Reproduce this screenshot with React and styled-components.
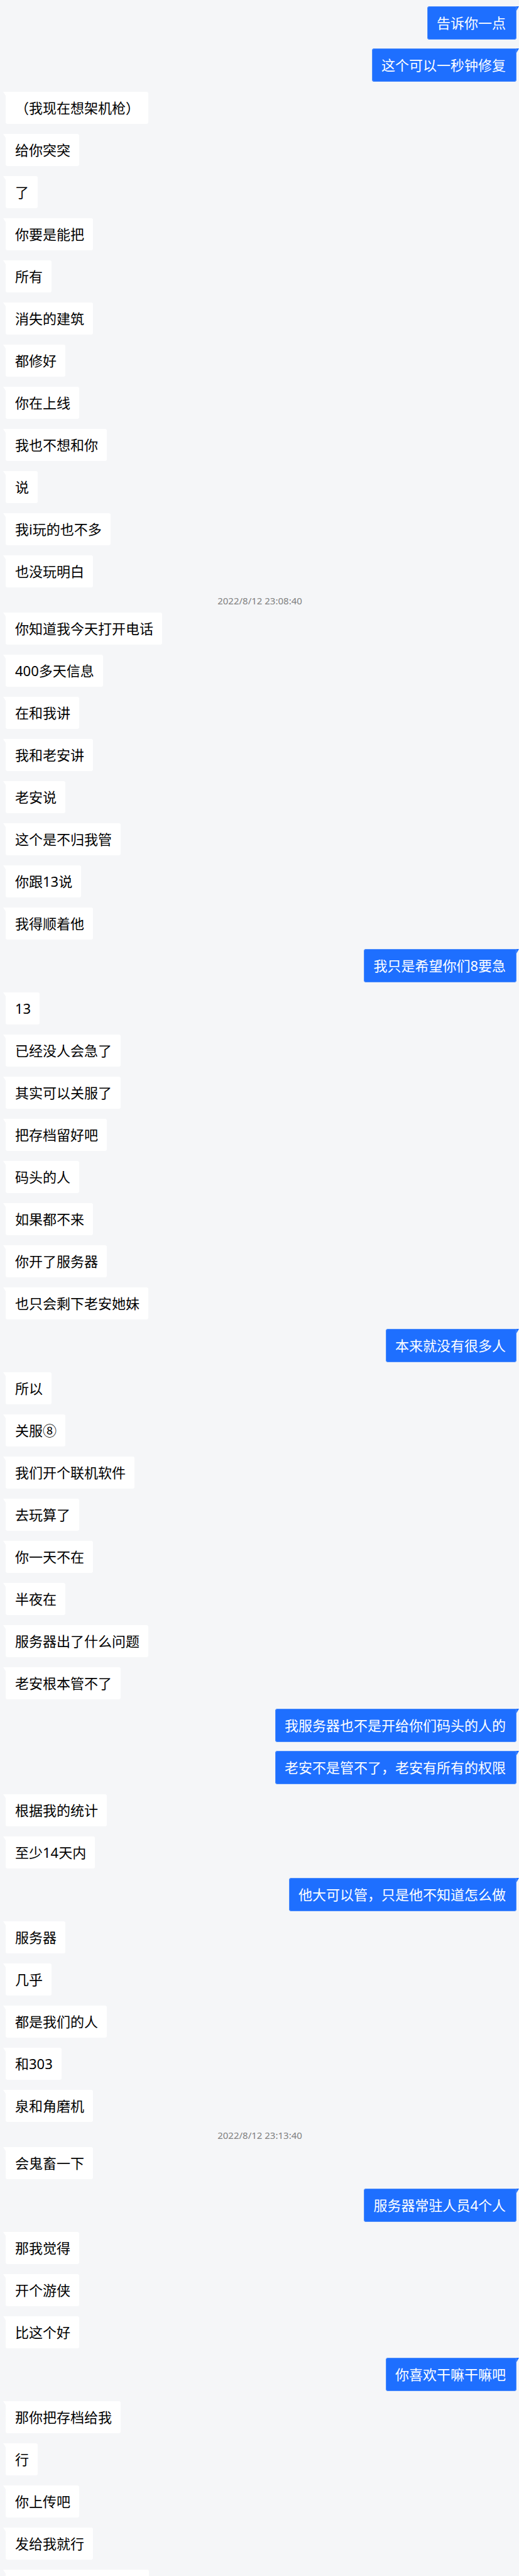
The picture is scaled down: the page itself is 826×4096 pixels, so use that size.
import React from "react";
import styled, { createGlobalStyle, css } from "styled-components";

const GlobalStyle = createGlobalStyle`
  * { box-sizing: border-box; }
  html, body { margin: 0; background: #f5f6f8; }
`;

const Page = styled.main`
  min-height: 100vh;
  padding: 10px 4px 0 5px;
  background: #f5f6f8;
  overflow: hidden;
  font-family: "Noto Sans", "Noto Sans CJK SC", sans-serif;
`;

const Thread = styled.ol`
  display: flex;
  flex-direction: column;
  margin: 0;
  padding: 0;
  list-style: none;
`;

const Row = styled.li`
  display: flex;
  padding-left: 4px;
  margin-top: 16px;
  justify-content: ${(p) => (p.$mine ? "flex-end" : "flex-start")};

  ${(p) => p.$turn && p.$mine && css`margin-top: 15px;`}
  ${(p) => !p.$turn && p.$mine && css`margin-top: 14px;`}
  &:first-child { margin-top: 0; }
`;

const Bubble = styled.p`
  position: relative;
  margin: 0;
  font-size: 22px;
  line-height: 31px;
  white-space: nowrap;
  padding: 10px 14px 10px 15px;
  color: #000;
  background: #fff;
  border-radius: 0 3px 3px 3px;

  &::before {
    content: "";
    position: absolute;
    top: 0;
    left: -4px;
    width: 4px;
    height: 6px;
    background: #fff;
    clip-path: polygon(0 0, 100% 0, 100% 100%);
  }

  ${(p) => p.$mine && css`
    padding: 11px 17px 11px 15px;
    color: #fff;
    background: #1e6fff;
    border-radius: 4px 0 4px 4px;
    box-shadow: inset 0 0 0 1px #4f8efc;

    &::before {
      left: auto;
      right: -4px;
      height: 7px;
      background: #1e6fff;
      clip-path: polygon(0 0, 100% 0, 0 100%);
    }
  `}
`;

const CutBubble = styled(Bubble)`
  width: 228px;
  height: 10px;
  padding: 0;
  border-radius: 0 3px 0 0;
`;

const StampRow = styled.li`
  display: flex;
  justify-content: center;
  margin: 11px 0 -7px;
  height: 20px;
  font-size: 15px;
  line-height: 20px;
  color: #808080;
`;

const THEM = "them";
const ME = "me";

const turns = [
  { from: ME, texts: ["告诉你一点", "这个可以一秒钟修复"] },
  {
    from: THEM,
    texts: ["（我现在想架机枪）", "给你突突", "了", "你要是能把", "所有", "消失的建筑", "都修好", "你在上线", "我也不想和你", "说", "我i玩的也不多", "也没玩明白"],
  },
  { stamp: "2022/8/12 23:08:40", iso: "2022-08-12T23:08:40" },
  {
    from: THEM,
    texts: ["你知道我今天打开电话", "400多天信息", "在和我讲", "我和老安讲", "老安说", "这个是不归我管", "你跟13说", "我得顺着他"],
  },
  { from: ME, texts: ["我只是希望你们8要急"] },
  {
    from: THEM,
    texts: ["13", "已经没人会急了", "其实可以关服了", "把存档留好吧", "码头的人", "如果都不来", "你开了服务器", "也只会剩下老安她妹"],
  },
  { from: ME, texts: ["本来就没有很多人"] },
  {
    from: THEM,
    texts: ["所以", "关服⑧", "我们开个联机软件", "去玩算了", "你一天不在", "半夜在", "服务器出了什么问题", "老安根本管不了"],
  },
  { from: ME, texts: ["我服务器也不是开给你们码头的人的", "老安不是管不了，老安有所有的权限"] },
  { from: THEM, texts: ["根据我的统计", "至少14天内"] },
  { from: ME, texts: ["他大可以管，只是他不知道怎么做"] },
  { from: THEM, texts: ["服务器", "几乎", "都是我们的人", "和303", "泉和角磨机"] },
  { stamp: "2022/8/12 23:13:40", iso: "2022-08-12T23:13:40" },
  { from: THEM, texts: ["会鬼畜一下"] },
  { from: ME, texts: ["服务器常驻人员4个人"] },
  { from: THEM, texts: ["那我觉得", "开个游侠", "比这个好"] },
  { from: ME, texts: ["你喜欢干嘛干嘛吧"] },
  { from: THEM, texts: ["那你把存档给我", "行", "你上传吧", "发给我就行"] },
];

function Turn({ from, texts }) {
  const mine = from === ME;
  return texts.map((text, i) => (
    <Row key={text} $mine={mine} $turn={i === 0}>
      <Bubble $mine={mine}>{text}</Bubble>
    </Row>
  ));
}

export default function App() {
  return (
    <>
      <GlobalStyle />
      <Page>
        <Thread>
          {turns.map((turn, i) =>
            turn.stamp ? (
              <StampRow key={i}>
                <time dateTime={turn.iso}>{turn.stamp}</time>
              </StampRow>
            ) : (
              <Turn key={i} from={turn.from} texts={turn.texts} />
            )
          )}
          <Row>
            <CutBubble />
          </Row>
        </Thread>
      </Page>
    </>
  );
}
